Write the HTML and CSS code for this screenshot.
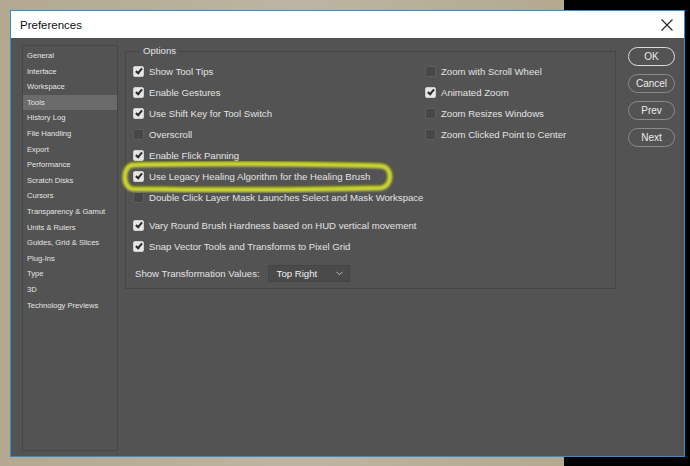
FILE: index.html
```html
<!DOCTYPE html>
<html lang="en">
<head>
    <meta charset="UTF-8">
    <title>Preferences</title>
    <link rel="stylesheet" href="styles.css">
</head>
<body>
    <div class="window">
        <div class="titlebar">
            <span class="title">Preferences</span>
            <svg class="close" width="12" height="12" viewBox="0 0 12 12">
                <path d="M0.5 0.5 L11.5 11.5 M11.5 0.5 L0.5 11.5" stroke="#222" stroke-width="1.1" fill="none"/>
            </svg>
        </div>

        <div class="content">
            <ul class="sidebar">
                <li>General</li>
                <li>Interface</li>
                <li>Workspace</li>
                <li class="active">Tools</li>
                <li>History Log</li>
                <li>File Handling</li>
                <li>Export</li>
                <li>Performance</li>
                <li>Scratch Disks</li>
                <li>Cursors</li>
                <li>Transparency &amp; Gamut</li>
                <li>Units &amp; Rulers</li>
                <li>Guides, Grid &amp; Slices</li>
                <li>Plug-Ins</li>
                <li>Type</li>
                <li>3D</li>
                <li>Technology Previews</li>
            </ul>

            <div class="group">
                <span class="legend">Options</span>
                <div class="cols">
                    <div class="col left">
                        <div class="row"><span class="box on"></span>Show Tool Tips</div>
                        <div class="row"><span class="box on"></span>Enable Gestures</div>
                        <div class="row"><span class="box on"></span>Use Shift Key for Tool Switch</div>
                        <div class="row"><span class="box"></span>Overscroll</div>
                        <div class="row"><span class="box on"></span>Enable Flick Panning</div>
                        <div class="row"><span class="box on"></span>Use Legacy Healing Algorithm for the Healing Brush</div>
                        <div class="row"><span class="box"></span>Double Click Layer Mask Launches Select and Mask Workspace</div>
                        <div class="row spaced"><span class="box on"></span>Vary Round Brush Hardness based on HUD vertical movement</div>
                        <div class="row"><span class="box on"></span>Snap Vector Tools and Transforms to Pixel Grid</div>
                        <div class="row select-row">
                            <span class="select-label">Show Transformation Values:</span>
                            <div class="select">
                                <span>Top Right</span>
                                <svg width="7" height="5" viewBox="0 0 7 5">
                                    <path d="M0.5 0.8 L3.5 3.8 L6.5 0.8" stroke="#bbb" stroke-width="1" fill="none"/>
                                </svg>
                            </div>
                        </div>
                    </div>
                    <div class="col right">
                        <div class="row"><span class="box"></span>Zoom with Scroll Wheel</div>
                        <div class="row"><span class="box on"></span>Animated Zoom</div>
                        <div class="row"><span class="box"></span>Zoom Resizes Windows</div>
                        <div class="row"><span class="box"></span>Zoom Clicked Point to Center</div>
                    </div>
                </div>
            </div>

            <div class="buttons">
                <button class="primary">OK</button>
                <button>Cancel</button>
                <button>Prev</button>
                <button>Next</button>
            </div>
        </div>
    </div>

    <!-- marker highlight drawn over the dialog -->
    <svg class="marker" width="280" height="34" viewBox="0 0 280 34">
        <defs>
            <filter id="soft"><feGaussianBlur stdDeviation="1.3"/></filter>
        </defs>
        <path d="M14 5 C80 3 200 4 262 6 C274 7 274 26 262 28 C190 30 80 30 14 29 C3 28 3 6 14 5 Z"
              stroke="#cad52b" stroke-width="5" fill="none" filter="url(#soft)"/>
    </svg>
</body>
</html>
```

FILE: styles.css
```css
body {
    margin: 0;
    width: 690px;
    height: 466px;
    overflow: hidden;
    background: linear-gradient(to right, #b3a990 0, #bdb5a2 300px, #b2a98f 564px, #000 564px);
    font-family: "Liberation Sans", Arial, sans-serif;
    position: relative;
}
.window {
    position: relative;
    margin: 10px 0 0 10px;
    width: 673px;
    height: 445px;
    border: 1px solid #2a8fd8;
    background-color: #535353;
    display: flex;
    flex-direction: column;
}
.titlebar {
    height: 28px;
    background-color: #fff;
    display: flex;
    align-items: center;
    justify-content: space-between;
    padding: 0 11px 0 9px;
}
.title {
    font-size: 11.5px;
    color: #111;
}
.close {
    display: block;
}
.content {
    flex: 1;
    display: flex;
    align-items: flex-start;
    padding: 7px 0 5px 11px;
}
.sidebar {
    list-style: none;
    margin: 0;
    padding: 2px 0 0 0;
    width: 94px;
    height: 402px;
    border: 1px solid #464646;
    background-color: #535353;
}
.sidebar li {
    height: 15.6px;
    line-height: 15.6px;
    padding-left: 4px;
    font-size: 7.6px;
    color: #e4e4e4;
}
.sidebar li.active {
    background-color: #6b6b6b;
}
.group {
    position: relative;
    margin: 6px 0 0 7px;
    width: 489px;
    height: 236px;
    border: 1px solid #464646;
}
.legend {
    position: absolute;
    top: -7px;
    left: 14px;
    padding: 0 3px;
    background-color: #535353;
    font-size: 9.6px;
    line-height: 12px;
    color: #e2e2e2;
}
.cols {
    display: flex;
    padding: 9px 0 0 7px;
}
.col.left {
    width: 292px;
}
.row {
    height: 21px;
    display: flex;
    align-items: center;
    gap: 5px;
    font-size: 9.6px;
    color: #e2e2e2;
    white-space: nowrap;
}
.row.spaced {
    margin-top: 7px;
}
.box {
    width: 9px;
    height: 9px;
    border: 1px solid #5e5e5e;
    border-radius: 2px;
    background-color: #474747;
    flex-shrink: 0;
    position: relative;
}
.box.on {
    background-color: #e6e6e6;
    border-color: #cfcfcf;
}
.box.on::after {
    content: "";
    position: absolute;
    left: 3px;
    top: 0px;
    width: 2px;
    height: 5px;
    border: solid #2a2a2a;
    border-width: 0 2px 2px 0;
    transform: rotate(40deg);
}
.select-row {
    margin-top: 6px;
    margin-left: 2px;
    gap: 8px;
}
.select {
    width: 82px;
    height: 17px;
    border: 1px solid #444;
    background-color: #4a4a4a;
    display: flex;
    align-items: center;
    justify-content: space-between;
    padding: 0 6px 0 8px;
    box-sizing: border-box;
    color: #f0f0f0;
}
.buttons {
    display: flex;
    flex-direction: column;
    gap: 8px;
    margin: 2px 0 0 12px;
}
.buttons button {
    width: 47px;
    height: 19px;
    border: 1px solid #8a8a8a;
    border-radius: 10px;
    background-color: #535353;
    color: #ececec;
    font-family: "Liberation Sans", Arial, sans-serif;
    font-size: 10px;
    padding: 0;
}
.buttons button.primary {
    border: 1.5px solid #dcdcdc;
}
.marker {
    position: absolute;
    left: 119px;
    top: 160px;
}
```
